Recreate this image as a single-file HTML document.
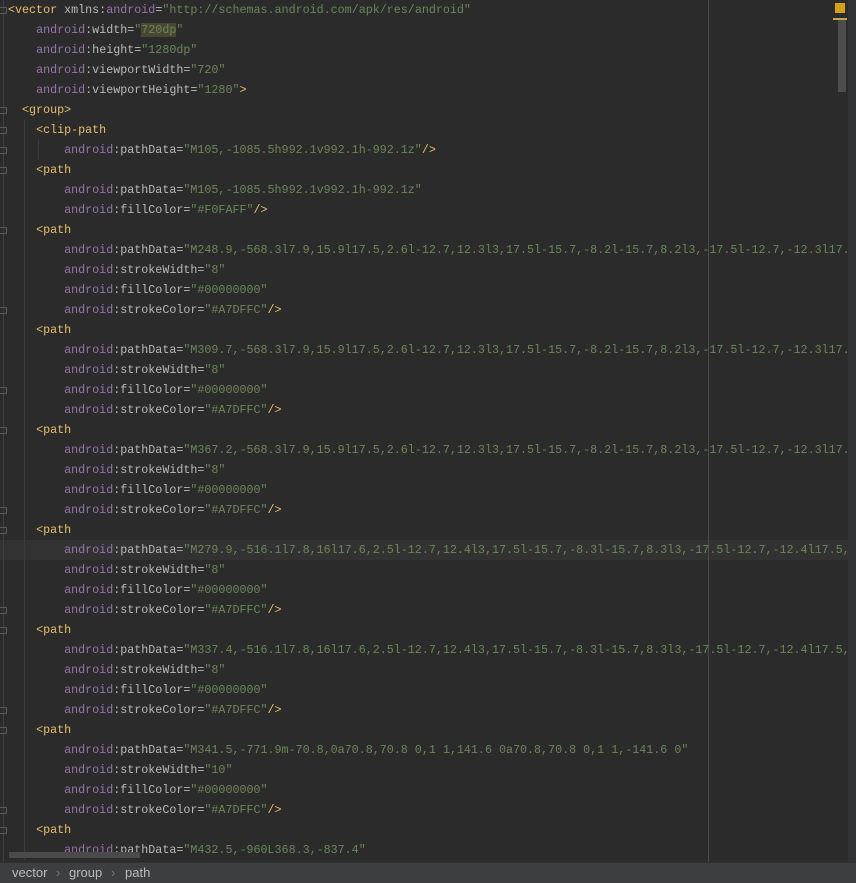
<!DOCTYPE html>
<html><head><meta charset="utf-8"><style>
html,body{margin:0;padding:0;background:#2b2b2b;width:856px;height:883px;overflow:hidden}
#ed{position:absolute;left:0;top:0;width:848px;height:862px;overflow:hidden;font-family:"Liberation Mono",monospace;font-size:11.7px;color:#bababa}
.l{position:absolute;left:8px;height:20px;line-height:20px;white-space:pre}
.t{color:#e8bf6a}.n{color:#9876aa}.v{color:#6a8759}
.hl{background:#4a4632}
#cur{position:absolute;left:0;top:540px;width:848px;height:20px;background:#323232}
#margin{position:absolute;left:708px;top:0;width:1px;height:862px;background:#4a4a4a}
.g{position:absolute;width:1px;background:#3b3b3b}
.f{position:absolute;left:0;width:7px;height:7px;border:1px solid #5a5a5a;border-left:none;box-sizing:border-box}
#gl{position:absolute;left:3px;top:0;width:1px;height:862px;background:#3e3e3e}
#sb{position:absolute;left:848px;top:0;width:8px;height:862px;background:#313335}
#thumb{position:absolute;left:838px;top:20px;width:8px;height:72px;background:#4d4d4d}
#mark{position:absolute;left:835px;top:3px;width:10px;height:10px;background:#d4a017}
#mark2{position:absolute;left:833px;top:18px;width:14px;height:2px;background:#c9a24a}
#hs{position:absolute;left:9px;top:852px;width:131px;height:6px;background:#4a4a4a}
#st{position:absolute;left:0;top:862px;width:856px;height:21px;background:#3c3f41;border-top:1px solid #323232;box-sizing:border-box;font-family:"Liberation Sans",sans-serif;font-size:13px;color:#bbbbbb;line-height:20px}
#st span{position:absolute;top:0}
</style></head><body>
<div id="ed">
<div id="cur"></div>
<div id="margin"></div>
<div id="gl"></div>
<div class="g" style="left:24px;top:120px;height:740px"></div>
<div class="g" style="left:38px;top:140px;height:20px"></div>
<div class="f" style="top:7px"></div>
<div class="f" style="top:107px"></div>
<div class="f" style="top:127px"></div>
<div class="f" style="top:147px"></div>
<div class="f" style="top:167px"></div>
<div class="f" style="top:227px"></div>
<div class="f" style="top:307px"></div>
<div class="f" style="top:387px"></div>
<div class="f" style="top:427px"></div>
<div class="f" style="top:507px"></div>
<div class="f" style="top:527px"></div>
<div class="f" style="top:607px"></div>
<div class="f" style="top:627px"></div>
<div class="f" style="top:707px"></div>
<div class="f" style="top:727px"></div>
<div class="f" style="top:807px"></div>
<div class="f" style="top:827px"></div>

<div class="l" style="top:0"><span class="t">&lt;vector </span>xmlns:<span class="n">android</span>=<span class="v">"http://schemas.android.com/apk/res/android"</span></div>
<div class="l" style="top:20px">    <span class="n">android</span>:width=<span class="v">"<span class="hl">720dp</span>"</span></div>
<div class="l" style="top:40px">    <span class="n">android</span>:height=<span class="v">"1280dp"</span></div>
<div class="l" style="top:60px">    <span class="n">android</span>:viewportWidth=<span class="v">"720"</span></div>
<div class="l" style="top:80px">    <span class="n">android</span>:viewportHeight=<span class="v">"1280"</span><span class="t">&gt;</span></div>
<div class="l" style="top:100px">  <span class="t">&lt;group&gt;</span></div>
<div class="l" style="top:120px">    <span class="t">&lt;clip-path</span></div>
<div class="l" style="top:140px">        <span class="n">android</span>:pathData=<span class="v">"M105,-1085.5h992.1v992.1h-992.1z"</span><span class="t">/&gt;</span></div>
<div class="l" style="top:160px">    <span class="t">&lt;path</span></div>
<div class="l" style="top:180px">        <span class="n">android</span>:pathData=<span class="v">"M105,-1085.5h992.1v992.1h-992.1z"</span></div>
<div class="l" style="top:200px">        <span class="n">android</span>:fillColor=<span class="v">"#F0FAFF"</span><span class="t">/&gt;</span></div>
<div class="l" style="top:220px">    <span class="t">&lt;path</span></div>
<div class="l" style="top:240px">        <span class="n">android</span>:pathData=<span class="v">"M248.9,-568.3l7.9,15.9l17.5,2.6l-12.7,12.3l3,17.5l-15.7,-8.2l-15.7,8.2l3,-17.5l-12.7,-12.3l17.5,-2.6z"</span></div>
<div class="l" style="top:260px">        <span class="n">android</span>:strokeWidth=<span class="v">"8"</span></div>
<div class="l" style="top:280px">        <span class="n">android</span>:fillColor=<span class="v">"#00000000"</span></div>
<div class="l" style="top:300px">        <span class="n">android</span>:strokeColor=<span class="v">"#A7DFFC"</span><span class="t">/&gt;</span></div>
<div class="l" style="top:320px">    <span class="t">&lt;path</span></div>
<div class="l" style="top:340px">        <span class="n">android</span>:pathData=<span class="v">"M309.7,-568.3l7.9,15.9l17.5,2.6l-12.7,12.3l3,17.5l-15.7,-8.2l-15.7,8.2l3,-17.5l-12.7,-12.3l17.5,-2.6z"</span></div>
<div class="l" style="top:360px">        <span class="n">android</span>:strokeWidth=<span class="v">"8"</span></div>
<div class="l" style="top:380px">        <span class="n">android</span>:fillColor=<span class="v">"#00000000"</span></div>
<div class="l" style="top:400px">        <span class="n">android</span>:strokeColor=<span class="v">"#A7DFFC"</span><span class="t">/&gt;</span></div>
<div class="l" style="top:420px">    <span class="t">&lt;path</span></div>
<div class="l" style="top:440px">        <span class="n">android</span>:pathData=<span class="v">"M367.2,-568.3l7.9,15.9l17.5,2.6l-12.7,12.3l3,17.5l-15.7,-8.2l-15.7,8.2l3,-17.5l-12.7,-12.3l17.5,-2.6z"</span></div>
<div class="l" style="top:460px">        <span class="n">android</span>:strokeWidth=<span class="v">"8"</span></div>
<div class="l" style="top:480px">        <span class="n">android</span>:fillColor=<span class="v">"#00000000"</span></div>
<div class="l" style="top:500px">        <span class="n">android</span>:strokeColor=<span class="v">"#A7DFFC"</span><span class="t">/&gt;</span></div>
<div class="l" style="top:520px">    <span class="t">&lt;path</span></div>
<div class="l" style="top:540px">        <span class="n">android</span>:pathData=<span class="v">"M279.9,-516.1l7.8,16l17.6,2.5l-12.7,12.4l3,17.5l-15.7,-8.3l-15.7,8.3l3,-17.5l-12.7,-12.4l17.5,-2.5z"</span></div>
<div class="l" style="top:560px">        <span class="n">android</span>:strokeWidth=<span class="v">"8"</span></div>
<div class="l" style="top:580px">        <span class="n">android</span>:fillColor=<span class="v">"#00000000"</span></div>
<div class="l" style="top:600px">        <span class="n">android</span>:strokeColor=<span class="v">"#A7DFFC"</span><span class="t">/&gt;</span></div>
<div class="l" style="top:620px">    <span class="t">&lt;path</span></div>
<div class="l" style="top:640px">        <span class="n">android</span>:pathData=<span class="v">"M337.4,-516.1l7.8,16l17.6,2.5l-12.7,12.4l3,17.5l-15.7,-8.3l-15.7,8.3l3,-17.5l-12.7,-12.4l17.5,-2.5z"</span></div>
<div class="l" style="top:660px">        <span class="n">android</span>:strokeWidth=<span class="v">"8"</span></div>
<div class="l" style="top:680px">        <span class="n">android</span>:fillColor=<span class="v">"#00000000"</span></div>
<div class="l" style="top:700px">        <span class="n">android</span>:strokeColor=<span class="v">"#A7DFFC"</span><span class="t">/&gt;</span></div>
<div class="l" style="top:720px">    <span class="t">&lt;path</span></div>
<div class="l" style="top:740px">        <span class="n">android</span>:pathData=<span class="v">"M341.5,-771.9m-70.8,0a70.8,70.8 0,1 1,141.6 0a70.8,70.8 0,1 1,-141.6 0"</span></div>
<div class="l" style="top:760px">        <span class="n">android</span>:strokeWidth=<span class="v">"10"</span></div>
<div class="l" style="top:780px">        <span class="n">android</span>:fillColor=<span class="v">"#00000000"</span></div>
<div class="l" style="top:800px">        <span class="n">android</span>:strokeColor=<span class="v">"#A7DFFC"</span><span class="t">/&gt;</span></div>
<div class="l" style="top:820px">    <span class="t">&lt;path</span></div>
<div class="l" style="top:840px">        <span class="n">android</span>:pathData=<span class="v">"M432.5,-960L368.3,-837.4"</span></div>
<div id="hs"></div>
</div>
<div id="sb"></div>
<div id="thumb"></div>
<div id="mark"></div>
<div id="mark2"></div>
<div id="st"><span style="left:12px">vector</span><span style="left:56px;color:#777">›</span><span style="left:69px">group</span><span style="left:111px;color:#777">›</span><span style="left:125px">path</span></div>
</body></html>
